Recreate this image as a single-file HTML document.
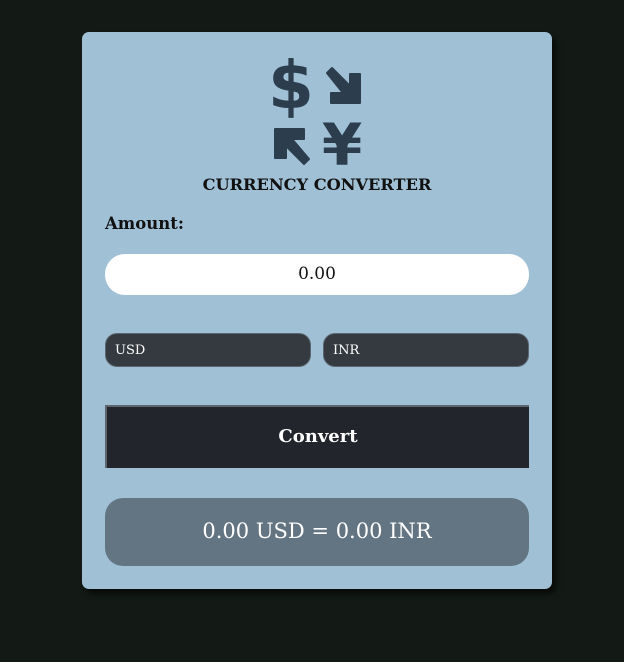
<!DOCTYPE html>
<html><head><style>
body{margin:0;width:624px;height:662px;background:#131a15;font-family:"DejaVu Serif","Liberation Serif",serif;position:relative;overflow:hidden}
.card{position:absolute;left:82px;top:32px;width:470px;height:557px;background:#a0c0d5;border-radius:7px;box-shadow:4px 5px 6px rgba(0,0,0,.6)}
.a{position:absolute}
.title{left:82px;width:470px;top:175px;text-align:center;font-weight:bold;font-size:16.2px;color:#111;white-space:nowrap}
.lbl{left:105px;top:214px;font-weight:bold;font-size:16.5px;color:#111}
.inp{left:105px;top:254px;width:424px;height:41px;background:#fff;border-radius:20px;text-align:center;line-height:41px;font-size:17px;color:#111}
.sel{top:333px;width:206px;height:34px;background:#343a40;border-radius:12px;box-sizing:border-box;padding-left:9px;line-height:34px;color:#fff;font-size:13px;border:1px solid #5a6570}
.btn{left:105px;top:405px;width:424px;height:63px;background:#22262c;border-top:2px solid #5d666e;border-left:2px solid #5d666e;box-sizing:border-box;text-align:center;line-height:60px;color:#fff;font-weight:bold;font-size:18px}
.res{left:105px;top:498px;width:424px;height:68px;background:#637582;border-radius:18px;text-align:center;line-height:66px;color:#fff;font-size:21px}
</style></head><body>
<div class="card"></div>
<svg class="a" style="left:270px;top:52px" width="96" height="118" viewBox="0 0 96 118">
<text x="21" y="56" font-family="DejaVu Sans" font-weight="bold" font-size="66" fill="#2c3e4d" text-anchor="middle">$</text>
<g fill="#2c3e4d" stroke="#2c3e4d" stroke-linejoin="round" stroke-width="2">
<path d="M57 21 L62 16 L80 34 L80 22 L90 22 L90 51 L61 51 L61 41 L73 41 Z"/>
<path d="M39 107 L34 112 L16 94 L16 106 L5 106 L5 77 L34 77 L34 87 L22 87 Z"/>
</g>
<text x="72" y="113" font-family="DejaVu Sans" font-weight="bold" font-size="58" fill="#2c3e4d" text-anchor="middle">¥</text>
</svg>
<div class="a title">CURRENCY CONVERTER</div>
<div class="a lbl">Amount:</div>
<div class="a inp">0.00</div>
<div class="a sel" style="left:105px">USD</div>
<div class="a sel" style="left:323px">INR</div>
<div class="a btn">Convert</div>
<div class="a res">0.00 USD = 0.00 INR</div>
</body></html>
